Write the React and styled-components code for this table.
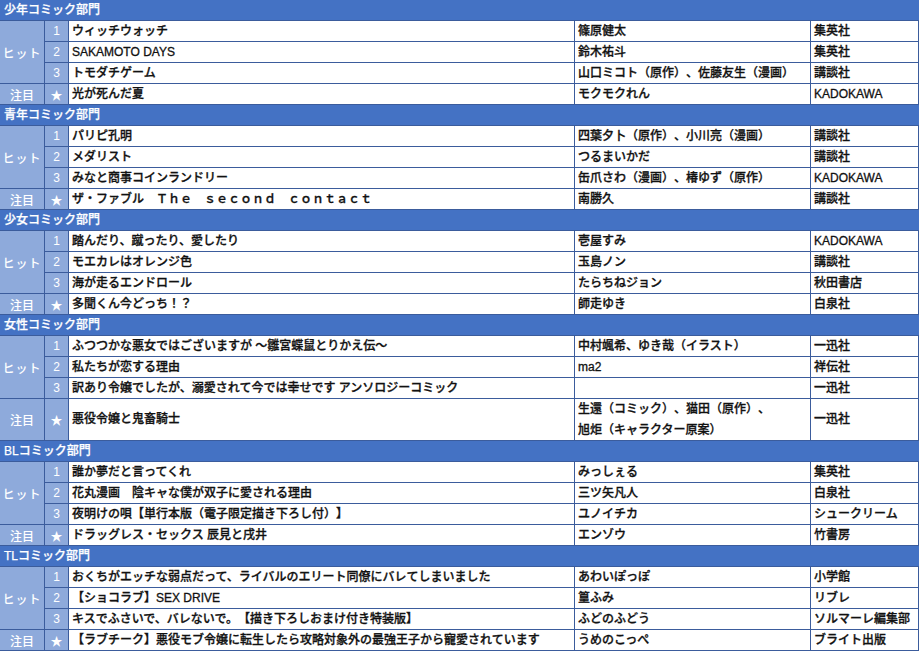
import React from "react";
import styled, { createGlobalStyle } from "styled-components";

const Global = createGlobalStyle`
  html, body { margin: 0; padding: 0; background: #ffffff; }
  body {
    font-family: "Liberation Sans", "Noto Sans CJK JP", sans-serif;
    text-spacing-trim: space-all;
  }
`;

const Page = styled.div`
  width: 919px;
  display: flex;
  flex-direction: column;
`;

const Section = styled.section`
  display: flex;
  flex-direction: column;
`;

const SectionHeader = styled.div`
  height: 20px;
  line-height: 20px;
  background: #4472c4;
  color: #ffffff;
  font-size: 12px;
  font-weight: 500;
  -webkit-text-stroke: 0.25px #ffffff;
  padding-left: 4px;
  white-space: nowrap;
`;

const Grid = styled.div`
  display: grid;
  grid-template-columns: 44px 23px 505px 235px 107px;
  grid-auto-rows: 20px;
  gap: 1px;
  padding: 1px 1px 1px 0;
  background: #3b5c9c;
`;

const LabelCell = styled.div`
  grid-row: span ${(p) => p.$span};
  background: #8eaadb;
  color: #ffffff;
  font-size: 12px;
  font-weight: 500;
  display: flex;
  align-items: center;
  justify-content: center;
  letter-spacing: ${(p) => (p.$wide ? "1px" : "0")};
`;

const NumCell = styled.div`
  grid-row: span ${(p) => p.$span || 1};
  background: #8eaadb;
  color: #ffffff;
  font-size: 12px;
  font-weight: 500;
  display: flex;
  align-items: center;
  justify-content: center;
`;

const Cell = styled.div`
  grid-row: span ${(p) => p.$span || 1};
  background: #ffffff;
  color: #111111;
  font-size: 12px;
  font-weight: 500;
  -webkit-text-stroke: 0.3px #111111;
  padding-left: 3px;
  display: flex;
  flex-direction: column;
  justify-content: center;
  line-height: 21px;
  white-space: nowrap;
  overflow: hidden;
`;

const sections = [
  {
    title: "少年コミック部門",
    hits: [
      ["ウィッチウォッチ", "篠原健太", "集英社"],
      ["SAKAMOTO DAYS", "鈴木祐斗", "集英社"],
      ["トモダチゲーム", "山口ミコト（原作）、佐藤友生（漫画）", "講談社"],
    ],
    pick: ["光が死んだ夏", "モクモクれん", "KADOKAWA"],
  },
  {
    title: "青年コミック部門",
    hits: [
      ["パリピ孔明", "四葉夕卜（原作）、小川亮（漫画）", "講談社"],
      ["メダリスト", "つるまいかだ", "講談社"],
      ["みなと商事コインランドリー", "缶爪さわ（漫画）、椿ゆず（原作）", "KADOKAWA"],
    ],
    pick: ["ザ・ファブル　Ｔｈｅ　ｓｅｃｏｎｄ　ｃｏｎｔａｃｔ", "南勝久", "講談社"],
  },
  {
    title: "少女コミック部門",
    hits: [
      ["踏んだり、蹴ったり、愛したり", "壱屋すみ", "KADOKAWA"],
      ["モエカレはオレンジ色", "玉島ノン", "講談社"],
      ["海が走るエンドロール", "たらちねジョン", "秋田書店"],
    ],
    pick: ["多聞くん今どっち！？", "師走ゆき", "白泉社"],
  },
  {
    title: "女性コミック部門",
    hits: [
      ["ふつつかな悪女ではございますが ～雛宮蝶鼠とりかえ伝～", "中村颯希、ゆき哉（イラスト）", "一迅社"],
      ["私たちが恋する理由", "ma2", "祥伝社"],
      ["訳あり令嬢でしたが、溺愛されて今では幸せです アンソロジーコミック", "", "一迅社"],
    ],
    pick: ["悪役令嬢と鬼畜騎士", ["生還（コミック）、猫田（原作）、", "旭炬（キャラクター原案）"], "一迅社"],
    tall: true,
  },
  {
    title: "BLコミック部門",
    hits: [
      ["誰か夢だと言ってくれ", "みっしぇる", "集英社"],
      ["花丸漫画　陰キャな僕が双子に愛される理由", "三ツ矢凡人", "白泉社"],
      ["夜明けの唄【単行本版（電子限定描き下ろし付）】", "ユノイチカ", "シュークリーム"],
    ],
    pick: ["ドラッグレス・セックス 辰見と戌井", "エンゾウ", "竹書房"],
  },
  {
    title: "TLコミック部門",
    hits: [
      ["おくちがエッチな弱点だって、ライバルのエリート同僚にバレてしまいました", "あわいぽっぽ", "小学館"],
      ["【ショコラブ】SEX DRIVE", "篁ふみ", "リブレ"],
      ["キスでふさいで、バレないで。【描き下ろしおまけ付き特装版】", "ふどのふどう", "ソルマーレ編集部"],
    ],
    pick: ["【ラブチーク】悪役モブ令嬢に転生したら攻略対象外の最強王子から寵愛されています", "うめのこっぺ", "ブライト出版"],
  },
];

function Author({ value }) {
  if (Array.isArray(value)) {
    return value.map((line, i) => <span key={i}>{line}</span>);
  }
  return value;
}

export default function App() {
  return (
    <>
      <Global />
      <Page>
        {sections.map((s) => {
          const span = s.tall ? 2 : 1;
          return (
            <Section key={s.title}>
              <SectionHeader>{s.title}</SectionHeader>
              <Grid>
                <LabelCell $span={3} $wide>ヒット</LabelCell>
                {s.hits.map((h, i) => (
                  <React.Fragment key={i}>
                    <NumCell>{i + 1}</NumCell>
                    <Cell>{h[0]}</Cell>
                    <Cell>{h[1]}</Cell>
                    <Cell>{h[2]}</Cell>
                  </React.Fragment>
                ))}
                <LabelCell $span={span}>注目</LabelCell>
                <NumCell $span={span}>★</NumCell>
                <Cell $span={span}>{s.pick[0]}</Cell>
                <Cell $span={span}>
                  <Author value={s.pick[1]} />
                </Cell>
                <Cell $span={span}>{s.pick[2]}</Cell>
              </Grid>
            </Section>
          );
        })}
      </Page>
    </>
  );
}
